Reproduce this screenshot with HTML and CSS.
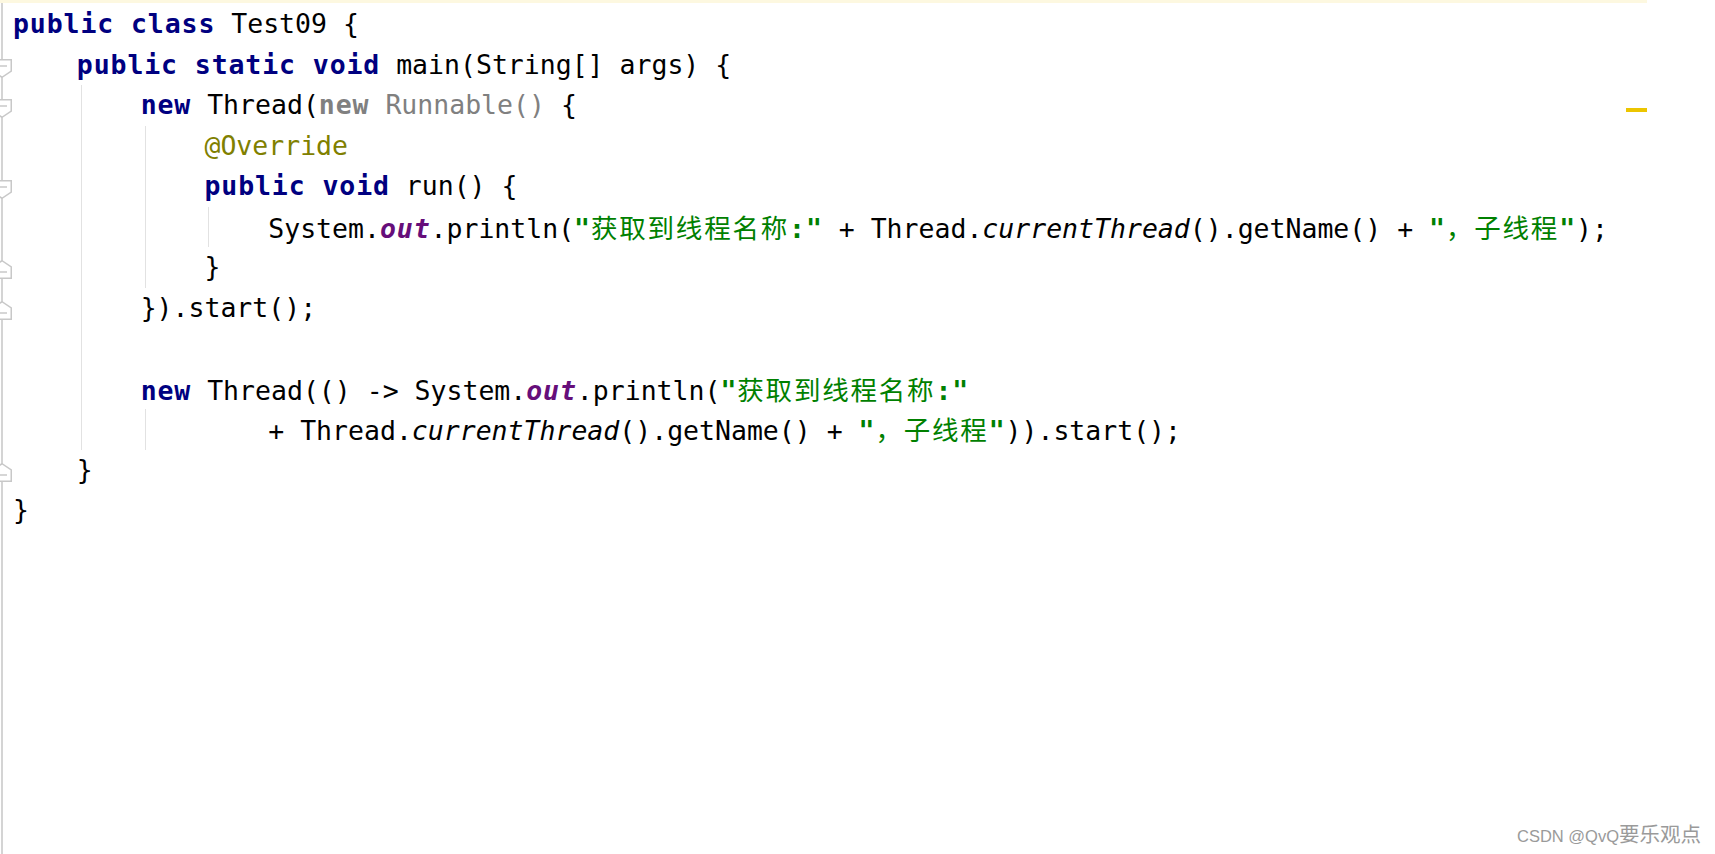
FILE: index.html
```html
<!DOCTYPE html>
<html lang="zh">
<head>
<meta charset="utf-8">
<title>Test09.java</title>
<link rel="stylesheet" href="styles.css">
</head>
<body>
<div class="editor">
  <div class="caret-row"></div>
  <div class="code">
    <div class="line"><span class="fold"></span><span class="txt"><span class="kw">public class</span> Test09 {</span></div>
    <div class="line"><span class="fold"><svg width="13" height="19" viewBox="0 0 13 19"><path d="M-8 0.75H11.25V12L2 18.25L-8 12Z" fill="#fff" stroke="#c8c8c8" stroke-width="1.5"/><path d="M-3 7H7" stroke="#c8c8c8" stroke-width="1.5"/></svg></span><span class="ind"></span><span class="txt"><span class="kw">public static void</span> main(String[] args) {</span></div>
    <div class="line"><span class="fold"><svg width="13" height="19" viewBox="0 0 13 19"><path d="M-8 0.75H11.25V12L2 18.25L-8 12Z" fill="#fff" stroke="#c8c8c8" stroke-width="1.5"/><path d="M-3 7H7" stroke="#c8c8c8" stroke-width="1.5"/></svg></span><span class="ind"></span><span class="ind g"></span><span class="txt"><span class="kw">new</span> Thread(<span class="dim b">new</span><span class="dim"> Runnable()</span> {</span></div>
    <div class="line"><span class="fold"></span><span class="ind"></span><span class="ind g"></span><span class="ind g"></span><span class="txt"><span class="ann">@Override</span></span></div>
    <div class="line"><span class="fold"><svg width="13" height="19" viewBox="0 0 13 19"><path d="M-8 0.75H11.25V12L2 18.25L-8 12Z" fill="#fff" stroke="#c8c8c8" stroke-width="1.5"/><path d="M-3 7H7" stroke="#c8c8c8" stroke-width="1.5"/></svg></span><span class="ind"></span><span class="ind g"></span><span class="ind g"></span><span class="txt"><span class="kw">public void</span> run() {</span></div>
    <div class="line"><span class="fold"></span><span class="ind"></span><span class="ind g"></span><span class="ind g"></span><span class="ind g"></span><span class="txt">System.<span class="fld">out</span>.println(<span class="str">"<span class="cjk">获取到线程名称</span>:"</span> + Thread.<span class="it">currentThread</span>().getName() + <span class="str">"<span class="cjk">，子线程</span>"</span>);</span></div>
    <div class="line"><span class="fold up"><svg width="13" height="19" viewBox="0 0 13 19"><path d="M-8 18.25H11.25V7L2 0.75L-8 7Z" fill="#fff" stroke="#c8c8c8" stroke-width="1.5"/><path d="M-3 12H7" stroke="#c8c8c8" stroke-width="1.5"/></svg></span><span class="ind"></span><span class="ind g"></span><span class="ind g"></span><span class="txt">}</span></div>
    <div class="line"><span class="fold up"><svg width="13" height="19" viewBox="0 0 13 19"><path d="M-8 18.25H11.25V7L2 0.75L-8 7Z" fill="#fff" stroke="#c8c8c8" stroke-width="1.5"/><path d="M-3 12H7" stroke="#c8c8c8" stroke-width="1.5"/></svg></span><span class="ind"></span><span class="ind g"></span><span class="txt">}).start();</span></div>
    <div class="line"><span class="fold"></span><span class="ind"></span><span class="ind g"></span></div>
    <div class="line"><span class="fold"></span><span class="ind"></span><span class="ind g"></span><span class="txt"><span class="kw">new</span> Thread(() -&gt; System.<span class="fld">out</span>.println(<span class="str">"<span class="cjk">获取到线程名称</span>:"</span></span></div>
    <div class="line"><span class="fold"></span><span class="ind"></span><span class="ind g"></span><span class="ind g"></span><span class="ind"></span><span class="txt">+ Thread.<span class="it">currentThread</span>().getName() + <span class="str">"<span class="cjk">，子线程</span>"</span>)).start();</span></div>
    <div class="line"><span class="fold up"><svg width="13" height="19" viewBox="0 0 13 19"><path d="M-8 18.25H11.25V7L2 0.75L-8 7Z" fill="#fff" stroke="#c8c8c8" stroke-width="1.5"/><path d="M-3 12H7" stroke="#c8c8c8" stroke-width="1.5"/></svg></span><span class="ind"></span><span class="txt">}</span></div>
    <div class="line"><span class="fold"></span><span class="txt">}</span></div>
  </div>
  <div class="stripe-mark"></div>
  <div class="wm">CSDN @QvQ<span class="wm-cjk">要乐观点</span></div>
</div>
</body>
</html>
```

FILE: styles.css
```css
html, body {
  margin: 0;
  padding: 0;
  background: #ffffff;
}

body {
  width: 1715px;
  height: 854px;
  overflow: hidden;
}

.editor {
  position: relative;
  height: 854px;
  background: linear-gradient(#d4d4d4, #d4d4d4) 1px 0 / 2px 100% no-repeat;
}

.caret-row {
  height: 3px;
  width: 1647px;
  background: #fdf8e0;
  margin-bottom: 1px;
}

.code {
  font-family: "DejaVu Sans Mono", "Noto Sans CJK SC", monospace;
  font-size: 26.5px;
  color: #000000;
}

.line {
  display: flex;
  height: 40.5px;
  line-height: 40.5px;
  white-space: pre;
}

.fold {
  flex: none;
  width: 13px;
}

.fold svg {
  display: block;
  margin-top: 14px;
  overflow: hidden;
}

.fold.up svg {
  margin-top: 13px;
}

.ind {
  flex: none;
  width: 4ch;
}

.ind.g {
  background: linear-gradient(#e2e2e2, #e2e2e2) 4px 0 / 1px 100% no-repeat;
}

.kw {
  color: #000080;
  font-weight: bold;
  letter-spacing: 0.9px;
}

.dim {
  color: #808080;
}

.b {
  font-weight: bold;
  letter-spacing: 0.9px;
}

.ann {
  color: #808000;
}

.fld {
  color: #660e7a;
  font-weight: bold;
  font-style: italic;
  letter-spacing: 0.9px;
}

.it {
  font-style: italic;
}

.str {
  color: #008000;
  font-weight: bold;
  letter-spacing: 0.9px;
}

.cjk {
  font-family: "Noto Sans CJK SC", sans-serif;
  font-weight: normal;
  letter-spacing: 1.8px;
}

.stripe-mark {
  position: absolute;
  left: 1626px;
  top: 108px;
  width: 21px;
  height: 4px;
  background: #ecc500;
}

.wm {
  position: absolute;
  right: 14px;
  bottom: 6px;
  font-family: "Liberation Sans", "Noto Sans CJK SC", sans-serif;
  font-size: 16.5px;
  line-height: 24px;
  color: #9a9a9a;
}

.wm-cjk {
  font-family: "Noto Sans CJK SC", sans-serif;
  font-size: 20.5px;
}
```
